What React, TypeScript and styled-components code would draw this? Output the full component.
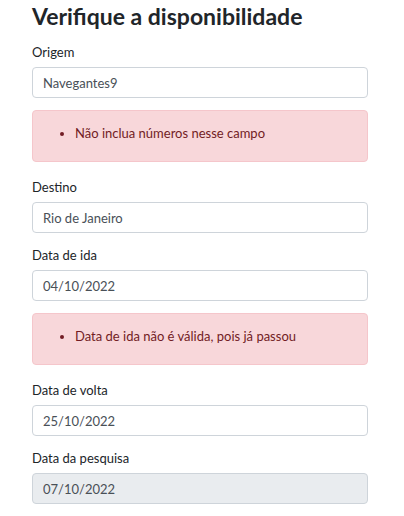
import React from "react";
import styled, { createGlobalStyle } from "styled-components";

const Global = createGlobalStyle`
  html, body { margin: 0; padding: 0; background: #ffffff; }
  body {
    font-family: Lato, "Open Sans", "Liberation Sans", sans-serif;
    font-size: 13px;
    line-height: 21px;
    color: #212529;
  }
  * { box-sizing: border-box; }
`;

const Page = styled.div`
  width: 404px;
  padding: 0 36px 0 32px;
`;

const Title = styled.h2`
  margin: 0 0 10px;
  font-size: 23px;
  line-height: 32px;
  font-weight: 700;
  color: #212529;
`;

const Group = styled.div`
  display: flex;
  flex-direction: column;
  margin-bottom: 12px;
`;

const Label = styled.label`
  display: block;
  line-height: 21px;
  margin-bottom: 4px;
  color: #212529;
`;

const Input = styled.input<{ $disabled?: boolean }>`
  display: block;
  width: 100%;
  height: 31px;
  padding: 0 10px;
  font-family: inherit;
  font-size: 13px;
  color: #495057;
  background: ${(p) => (p.$disabled ? "#e9ecef" : "#ffffff")};
  border: 1px solid #ced4da;
  border-radius: 4px;
  outline: none;
`;

const Alert = styled.div`
  height: 52px;
  margin-bottom: 15px;
  padding: 12px 20px 0;
  background: #f8d7da;
  border: 1px solid #f5c6cb;
  border-radius: 4px;
  color: #721c24;
`;

const ErrorList = styled.ul`
  margin: 0;
  padding-left: 22px;
`;

type Field = {
  label: string;
  value: string;
  error?: string;
  disabled?: boolean;
};

const fields: Field[] = [
  { label: "Origem", value: "Navegantes9", error: "Não inclua números nesse campo" },
  { label: "Destino", value: "Rio de Janeiro" },
  { label: "Data de ida", value: "04/10/2022", error: "Data de ida não é válida, pois já passou" },
  { label: "Data de volta", value: "25/10/2022" },
  { label: "Data da pesquisa", value: "07/10/2022", disabled: true },
];

export default function App() {
  return (
    <Page>
      <Global />
      <Title>Verifique a disponibilidade</Title>
      {fields.map((f) => (
        <React.Fragment key={f.label}>
          <Group>
            <Label>{f.label}</Label>
            <Input
              defaultValue={f.value}
              disabled={f.disabled}
              $disabled={f.disabled}
              readOnly={!f.disabled}
            />
          </Group>
          {f.error && (
            <Alert>
              <ErrorList>
                <li>{f.error}</li>
              </ErrorList>
            </Alert>
          )}
        </React.Fragment>
      ))}
    </Page>
  );
}
